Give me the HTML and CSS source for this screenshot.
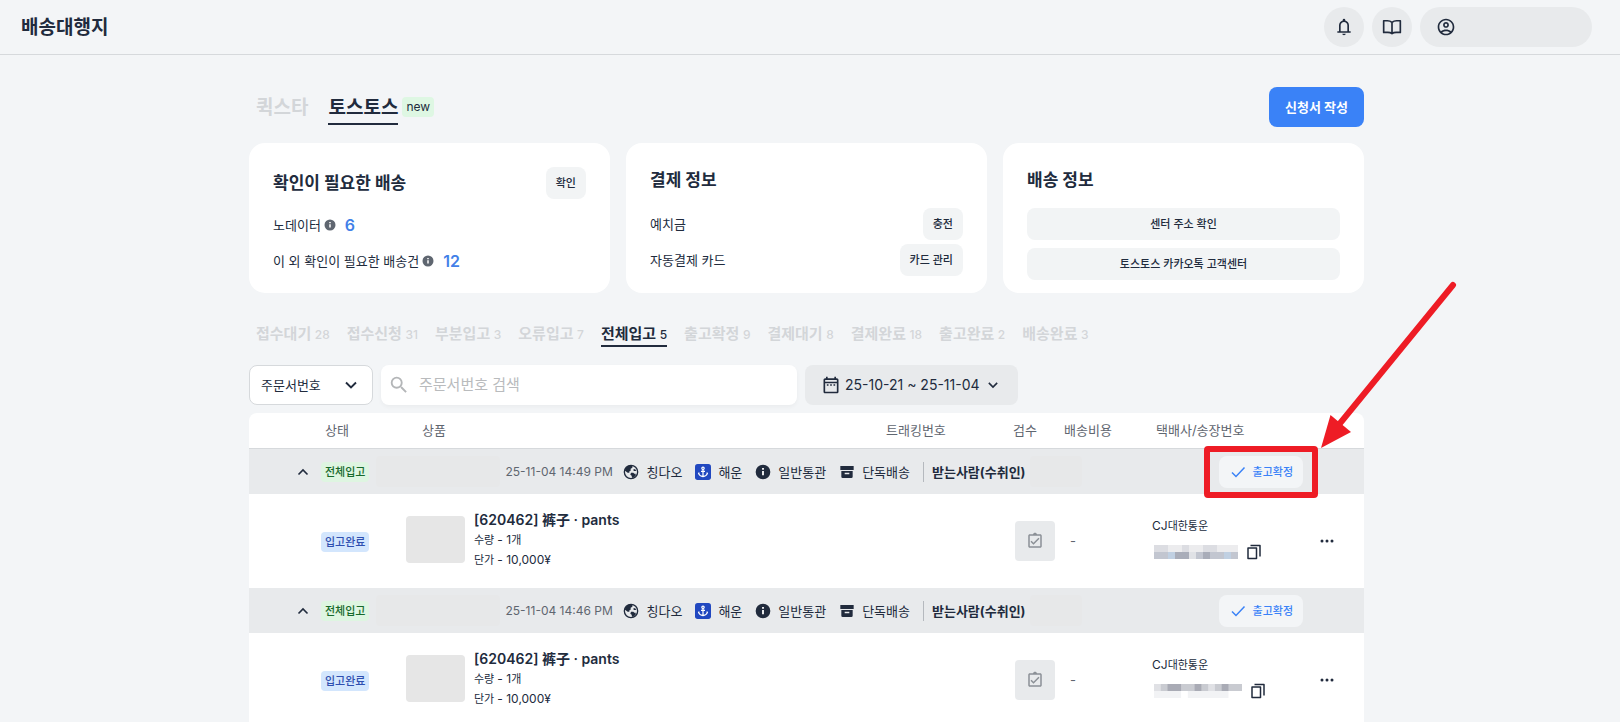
FILE: index.html
```html
<!DOCTYPE html>
<html lang="ko">
<head>
<meta charset="utf-8">
<meta name="viewport" content="width=device-width, initial-scale=1">
<title>배송대행지</title>
<link rel="stylesheet" href="styles.css">
</head>
<body>
<svg class="sprite" aria-hidden="true">
  <symbol id="i-bell" viewBox="0 -960 960 960"><path d="M160-200v-80h80v-280q0-83 50-147.500T420-792v-28q0-25 17.500-42.500T480-880t42.500 17.500T540-820v28q80 20 130 84.500T720-560v280h80v80H160Zm320 120q-33 0-56.500-23.500T400-160h160q0 33-23.500 56.500T480-80ZM320-280h320v-280q0-66-47-113t-113-47q-66 0-113 47t-47 113v280Z"/></symbol>
  <symbol id="i-book" viewBox="0 0 24 24"><path fill="none" stroke="currentColor" stroke-width="2" stroke-linejoin="round" d="M12 6.500C10.500 5.200 8.500 4.500 6.500 4.500H2v14h5c2 0 3.600.4 5 1.500 1.400-1.100 3-1.500 5-1.500h5v-14h-4.500c-2 0-4 .7-5.500 2zM12 6.500V20"/></symbol>
  <symbol id="i-user" viewBox="0 0 24 24"><path d="M12 2C6.480 2 2 6.480 2 12s4.480 10 10 10 10-4.480 10-10S17.520 2 12 2zM7.350 18.500C8.660 17.560 10.260 17 12 17s3.340.56 4.650 1.500c-1.310.94-2.910 1.500-4.650 1.500s-3.340-.56-4.650-1.500zm10.790-1.380C16.450 15.800 14.320 15 12 15s-4.450.8-6.140 2.120C4.700 15.730 4 13.950 4 12c0-4.420 3.580-8 8-8s8 3.580 8 8c0 1.950-.7 3.730-1.860 5.120zM12 6c-1.930 0-3.500 1.570-3.500 3.500S10.070 13 12 13s3.500-1.570 3.500-3.500S13.930 6 12 6zm0 5c-.83 0-1.500-.67-1.500-1.500S11.170 8 12 8s1.500.67 1.500 1.500S12.830 11 12 11z"/></symbol>
  <symbol id="i-info" viewBox="0 0 24 24"><path fill-rule="evenodd" d="M12 1a11 11 0 1 0 0 22 11 11 0 0 0 0-22zm1.500 16h-3v-6.500h3V17zm0-8.500h-3V6h3v2.500z"/></symbol>
  <symbol id="i-down" viewBox="0 0 12 12"><path fill="none" stroke="currentColor" stroke-width="1.900" d="M1 3.500l5 5 5-5"/></symbol>
  <symbol id="i-up" viewBox="0 0 12 12"><path fill="none" stroke="currentColor" stroke-width="1.600" d="M1.500 8.500L6 4l4.500 4.500"/></symbol>
  <symbol id="i-search" viewBox="0 0 24 24"><path d="M15.500 14h-.79l-.28-.27A6.471 6.471 0 0 0 16 9.500 6.500 6.500 0 1 0 9.500 16c1.610 0 3.090-.59 4.230-1.570l.27.28v.79l5 4.990L20.490 19l-4.990-5zm-6 0C7.010 14 5 11.990 5 9.500S7.010 5 9.500 5 14 7.010 14 9.500 11.990 14 9.500 14z"/></symbol>
  <symbol id="i-calendar" viewBox="0 0 24 24"><path d="M7 11h2v2H7v-2zm14-5v14c0 1.100-.9 2-2 2H5c-1.110 0-2-.9-2-2l.01-14c0-1.100.88-2 1.990-2h1V2h2v2h8V2h2v2h1c1.100 0 2 .9 2 2zM5 8h14V6H5v2zm14 12V10H5v10h14zm-4-7h2v-2h-2v2zm-4 0h2v-2h-2v2z"/></symbol>
  <symbol id="i-globe" viewBox="0 0 24 24"><circle cx="12" cy="12" r="10" fill="none" stroke="currentColor" stroke-width="2"/><path d="M3 10c0-4 4-8 9-8l2 1.500c1 1.500-.5 3.500-2.500 3.500v2.500c0 1-1 1.500-2 1.500v2H7zM12 13h3.500l1.500 1.500h2v3l-3.500 3h-2l-.5-3-2-1.500zM15 8.500l3-1 2 3h-3.500z"/></symbol>
  <symbol id="i-anchor" viewBox="0 0 24 24"><rect width="24" height="24" rx="4" fill="#2148c0"/><g fill="none" stroke="#fff" stroke-width="1.800"><circle cx="12" cy="6.500" r="1.800"/><path d="M12 8.300V19M9 11h6M5.500 13v1.500c1 2.800 3.500 4 6.500 4.300 3-.3 5.500-1.500 6.500-4.300V13M5 15l1.500-2M19 15l-1.500-2"/></g></symbol>
  <symbol id="i-archive" viewBox="0 0 24 24"><path fill-rule="evenodd" d="M2 3h20v6H2zM3.500 10.500h17V19a2 2 0 0 1-2 2h-13a2 2 0 0 1-2-2zM8.500 13v2.500h7V13z"/></symbol>
  <symbol id="i-check" viewBox="0 0 16 16"><path fill="none" stroke="currentColor" stroke-width="1.500" d="M2 8.500l4 4L14.500 3.500"/></symbol>
  <symbol id="i-inspect" viewBox="0 0 24 24"><path d="M19 3h-4.180C14.400 1.840 13.300 1 12 1s-2.400.84-2.820 2H5c-1.100 0-2 .9-2 2v14c0 1.100.9 2 2 2h14c1.100 0 2-.9 2-2V5c0-1.100-.9-2-2-2zm0 16H5V5h14v14zM17.990 9l-1.410-1.420-6.590 6.590-2.580-2.570-1.420 1.410 4 3.990z"/></symbol>
  <symbol id="i-copy" viewBox="0 0 16 16"><path fill="none" stroke="currentColor" stroke-width="1.500" stroke-linejoin="round" d="M2 4h8.500v10.500H2zM4.500 1.500H14v11"/></symbol>
  <symbol id="i-more" viewBox="0 0 16 16"><circle cx="3" cy="8" r="1.500"/><circle cx="8" cy="8" r="1.500"/><circle cx="13" cy="8" r="1.500"/></symbol>
</svg>

<header class="topbar">
  <h1 class="topbar-title">배송대행지</h1>
  <div class="topbar-actions">
    <button class="round-btn" type="button" aria-label="알림"><svg class="icon-20"><use href="#i-bell"/></svg></button>
    <button class="round-btn" type="button" aria-label="가이드"><svg class="icon-20"><use href="#i-book"/></svg></button>
    <button class="round-btn account-btn" type="button" aria-label="내 계정"><svg class="icon-20"><use href="#i-user"/></svg></button>
  </div>
</header>

<main class="page">
  <div class="brand-row">
    <nav class="brand-tabs">
      <a class="brand-tab" href="#">퀵스타</a>
      <a class="brand-tab active" href="#">토스토스</a>
      <span class="badge-new">new</span>
    </nav>
    <button class="primary-btn" type="button">신청서 작성</button>
  </div>

  <section class="cards">
    <article class="card">
      <div class="card-head"><h2 class="card-title">확인이 필요한 배송</h2><button class="soft-btn" type="button">확인</button></div>
      <p class="stat">노데이터<svg class="icon-12"><use href="#i-info"/></svg><strong class="stat-num">6</strong></p>
      <p class="stat">이 외 확인이 필요한 배송건<svg class="icon-12"><use href="#i-info"/></svg><strong class="stat-num">12</strong></p>
    </article>
    <article class="card">
      <h2 class="card-title spaced">결제 정보</h2>
      <div class="card-stack tight">
        <div class="pay-row"><span>예치금</span><button class="soft-btn" type="button">충전</button></div>
        <div class="pay-row"><span>자동결제 카드</span><button class="soft-btn" type="button">카드 관리</button></div>
      </div>
    </article>
    <article class="card">
      <h2 class="card-title spaced">배송 정보</h2>
      <div class="card-stack">
        <button class="soft-btn" type="button">센터 주소 확인</button>
        <button class="soft-btn" type="button">토스토스 카카오톡 고객센터</button>
      </div>
    </article>
  </section>

  <nav class="status-tabs">
    <a class="status-tab" href="#">접수대기 <span class="count">28</span></a>
    <a class="status-tab" href="#">접수신청 <span class="count">31</span></a>
    <a class="status-tab" href="#">부분입고 <span class="count">3</span></a>
    <a class="status-tab" href="#">오류입고 <span class="count">7</span></a>
    <a class="status-tab active" href="#">전체입고 <span class="count">5</span></a>
    <a class="status-tab" href="#">출고확정 <span class="count">9</span></a>
    <a class="status-tab" href="#">결제대기 <span class="count">8</span></a>
    <a class="status-tab" href="#">결제완료 <span class="count">18</span></a>
    <a class="status-tab" href="#">출고완료 <span class="count">2</span></a>
    <a class="status-tab" href="#">배송완료 <span class="count">3</span></a>
  </nav>

  <div class="filters">
    <div class="select-box">
      <select class="select" aria-label="검색 기준"><option>주문서번호</option></select>
      <svg class="select-arrow"><use href="#i-down"/></svg>
    </div>
    <label class="search-box">
      <svg class="icon-22"><use href="#i-search"/></svg>
      <input class="search-input" type="text" placeholder="주문서번호 검색" aria-label="주문서번호 검색">
    </label>
    <button class="date-btn" type="button"><svg class="icon-20"><use href="#i-calendar"/></svg><span>25-10-21 ~ 25-11-04</span><svg class="icon-10"><use href="#i-down"/></svg></button>
  </div>

  <table class="orders">
    <colgroup><col class="c-toggle"><col class="c-status"><col><col class="c-track"><col class="c-inspect"><col class="c-cost"><col class="c-courier"><col class="c-more"></colgroup>
    <thead>
      <tr><th></th><th>상태</th><th class="th-product">상품</th><th>트래킹번호</th><th>검수</th><th>배송비용</th><th>택배사/송장번호</th><th></th></tr>
    </thead>
    <tbody>
      <tr class="group-row">
        <td colspan="8">
          <div class="group">
            <button class="bare-btn toggle" type="button" aria-label="접기"><svg class="icon-12"><use href="#i-up"/></svg></button>
            <span class="tag tag-green">전체입고</span>
            <span class="masked masked-id"></span>
            <time class="stamp">25-11-04 14:49 PM</time>
            <span class="meta"><svg class="icon-16"><use href="#i-globe"/></svg>칭다오</span>
            <span class="meta"><svg class="icon-16"><use href="#i-anchor"/></svg>해운</span>
            <span class="meta"><svg class="icon-16"><use href="#i-info"/></svg>일반통관</span>
            <span class="meta"><svg class="icon-16"><use href="#i-archive"/></svg>단독배송</span>
            <strong class="receiver">받는사람(수취인)</strong>
            <span class="masked masked-name"></span>
            <div class="confirm">
              <button class="confirm-btn" type="button"><svg class="icon-16"><use href="#i-check"/></svg>출고확정</button>
              <svg class="callout" viewBox="0 0 256 220" aria-hidden="true"><rect x="3" y="169" width="108" height="46" rx="1" fill="none" stroke="#ee1c25" stroke-width="6"/><path d="M249 5L133 147" stroke="#ee1c25" stroke-width="6" stroke-linecap="round"/><path d="M117 168l9.500-33 20.500 17z" fill="#ee1c25"/></svg>
            </div>
          </div>
        </td>
      </tr>
      <tr class="item-row">
        <td></td>
        <td><span class="tag tag-blue">입고완료</span></td>
        <td>
          <div class="product">
            <span class="thumb"></span>
            <div class="product-text">
              <p class="product-name">[620462] <span lang="zh" class="zh">裤子</span> · pants</p>
              <p class="product-line">수량 <span class="num">- 1</span>개</p>
              <p class="product-line">단가 <span class="num">- 10,000¥</span></p>
            </div>
          </div>
        </td>
        <td></td>
        <td><button class="inspect-btn" type="button" aria-label="검수"><svg class="icon-18"><use href="#i-inspect"/></svg></button></td>
        <td class="cost">-</td>
        <td class="courier-cell">
          <p class="courier"><span class="num">CJ</span>대한통운</p>
          <div class="invoice">
            <svg class="mosaic" viewBox="0 0 84 14" preserveAspectRatio="none" aria-hidden="true"><path fill="#ececee" d="M0 0h84v14H0z"/><path fill="#dcdde2" d="M0 0h14v7H0zM28 0h7v7h-7zM49 0h14v7H49z"/><path fill="#c2c6d0" d="M0 7h84v7H0z"/><path fill="#a9adb9" d="M21 7h14v7H21zM49 7h7v7h-7z"/><path fill="#c0d0e2" d="M14 7h7v7h-7zM70 7h7v7h-7z"/><path fill="#e0e2e6" d="M35 7h7v7h-7z"/></svg>
            <button class="bare-btn" type="button" aria-label="복사"><svg class="icon-16"><use href="#i-copy"/></svg></button>
          </div>
        </td>
        <td><button class="bare-btn more" type="button" aria-label="더보기"><svg class="icon-16"><use href="#i-more"/></svg></button></td>
      </tr>
      <tr class="group-row">
        <td colspan="8">
          <div class="group">
            <button class="bare-btn toggle" type="button" aria-label="접기"><svg class="icon-12"><use href="#i-up"/></svg></button>
            <span class="tag tag-green">전체입고</span>
            <span class="masked masked-id"></span>
            <time class="stamp">25-11-04 14:46 PM</time>
            <span class="meta"><svg class="icon-16"><use href="#i-globe"/></svg>칭다오</span>
            <span class="meta"><svg class="icon-16"><use href="#i-anchor"/></svg>해운</span>
            <span class="meta"><svg class="icon-16"><use href="#i-info"/></svg>일반통관</span>
            <span class="meta"><svg class="icon-16"><use href="#i-archive"/></svg>단독배송</span>
            <strong class="receiver">받는사람(수취인)</strong>
            <span class="masked masked-name"></span>
            <div class="confirm">
              <button class="confirm-btn" type="button"><svg class="icon-16"><use href="#i-check"/></svg>출고확정</button>
            </div>
          </div>
        </td>
      </tr>
      <tr class="item-row">
        <td></td>
        <td><span class="tag tag-blue">입고완료</span></td>
        <td>
          <div class="product">
            <span class="thumb"></span>
            <div class="product-text">
              <p class="product-name">[620462] <span lang="zh" class="zh">裤子</span> · pants</p>
              <p class="product-line">수량 <span class="num">- 1</span>개</p>
              <p class="product-line">단가 <span class="num">- 10,000¥</span></p>
            </div>
          </div>
        </td>
        <td></td>
        <td><button class="inspect-btn" type="button" aria-label="검수"><svg class="icon-18"><use href="#i-inspect"/></svg></button></td>
        <td class="cost">-</td>
        <td class="courier-cell">
          <p class="courier"><span class="num">CJ</span>대한통운</p>
          <div class="invoice">
            <svg class="mosaic mosaic-wide" viewBox="0 0 91 14" preserveAspectRatio="none" aria-hidden="true"><path fill="#c9cbd1" d="M0 0h91v7H0z"/><path fill="#a9abb5" d="M14 0h14v7H14zM42 0h7v7h-7zM70 0h7v7h-7z"/><path fill="#e0e1e5" d="M0 0h7v7H0zM56 0h7v7h-7z"/><path fill="#f2f3f5" d="M0 7h28v7H0zM35 7h42v7H35z"/></svg>
            <button class="bare-btn" type="button" aria-label="복사"><svg class="icon-16"><use href="#i-copy"/></svg></button>
          </div>
        </td>
        <td><button class="bare-btn more" type="button" aria-label="더보기"><svg class="icon-16"><use href="#i-more"/></svg></button></td>
      </tr>
    </tbody>
  </table>
</main>
</body>
</html>
```
FILE: styles.css
```css
:root {
  --ink: #212b3d;
  --muted: #5f6670;
  --faint: #d3d6d9;
  --bg: #f3f5f7;
  --fill: #e8eaec;
  --blue: #3a82f7;
}

* { box-sizing: border-box; margin: 0; }

body {
  display: flex;
  flex-direction: column;
  height: 100vh;
  overflow: hidden;
  background: var(--bg);
  color: var(--ink);
  font: 13px/20px Inter, "Noto Sans CJK KR", sans-serif;
}

button, input, select { font: inherit; color: inherit; border: 0; padding: 0; }
button { cursor: pointer; }
a { color: inherit; text-decoration: none; }
svg { display: block; flex: none; fill: currentColor; }

.sprite { position: absolute; width: 0; height: 0; }
.icon-10 { width: 10px; height: 10px; }
.icon-12 { width: 12px; height: 12px; }
.icon-16 { width: 16px; height: 16px; }
.icon-18 { width: 18px; height: 18px; }
.icon-20 { width: 20px; height: 20px; }
.icon-22 { width: 22px; height: 22px; }

.topbar {
  display: flex;
  flex: none;
  align-items: center;
  justify-content: space-between;
  padding: 7px 28px 7px 21px;
  border-bottom: 1px solid #d6d9dc;
}
.topbar-title { padding-top: 2px; font-size: 19px; line-height: 28px; font-weight: 700; }
.topbar-actions { display: flex; gap: 8px; }
.round-btn {
  display: flex;
  align-items: center;
  justify-content: center;
  width: 40px;
  height: 40px;
  border-radius: 20px;
  background: var(--fill);
}
.account-btn { width: 172px; justify-content: flex-start; padding-left: 16px; }

.page {
  flex: 1;
  min-height: 0;
  width: 100%;
  max-width: 1122px;
  margin: 0 auto;
  padding: 32px 7px 0 0;
}

.brand-row { display: flex; justify-content: space-between; align-items: center; }
.brand-tabs { display: flex; align-items: center; gap: 20px; padding-left: 7px; }
.brand-tab {
  padding: 6px 0 2px;
  border-bottom: 2px solid transparent;
  color: var(--faint);
  font-size: 19px;
  line-height: 26px;
  font-weight: 700;
}
.brand-tab.active { color: var(--ink); border-color: var(--ink); }
.badge-new {
  margin-left: -16px;
  padding: 0 4px;
  border-radius: 4px;
  background: #def7e3;
  font-size: 12px;
}
.primary-btn {
  height: 40px;
  padding: 0 16px;
  border-radius: 8px;
  background: var(--blue);
  color: #fff;
  font-weight: 700;
}

.cards { display: grid; grid-template-columns: repeat(3, 1fr); gap: 16px; margin-top: 16px; }
.card { padding: 24px 24px 13px; border-radius: 16px; background: #fff; }
.card-head { display: flex; align-items: center; justify-content: space-between; margin-bottom: 8px; }
.card-title { font-size: 17px; line-height: 26px; font-weight: 700; }
.card-title.spaced { margin-bottom: 15px; }
.card-stack { display: flex; flex-direction: column; gap: 8px; }
.card-stack.tight { gap: 4px; }
.stat { display: flex; align-items: center; height: 36px; }
.stat .icon-12 { margin: 0 9px 0 3px; color: #5f6670; }
.stat-num { color: #4280e8; font-size: 16px; font-weight: 600; }
.pay-row { display: flex; align-items: center; justify-content: space-between; }
.soft-btn {
  height: 32px;
  padding: 0 10px;
  border-radius: 8px;
  background: #f2f4f5;
  font-size: 11px;
  font-weight: 500;
}

.status-tabs { display: flex; gap: 17px; margin-top: 31px; padding-left: 7px; }
.status-tab {
  padding-bottom: 1px;
  border-bottom: 2px solid transparent;
  color: var(--faint);
  font-size: 15px;
  line-height: 20px;
  font-weight: 700;
}
.status-tab.active { color: var(--ink); border-color: var(--ink); }
.count { font-size: 12px; line-height: 12px; font-weight: 500; }

.filters { display: flex; gap: 8px; margin-top: 18px; }
.select-box { position: relative; width: 124px; }
.select {
  width: 100%;
  height: 40px;
  padding: 0 11px;
  border: 1px solid #d6d9dc;
  border-radius: 8px;
  background: #fff;
  appearance: none;
}
.select-arrow { position: absolute; top: 14px; right: 16px; width: 12px; height: 12px; pointer-events: none; }
.search-box {
  display: flex;
  align-items: center;
  gap: 9px;
  width: 416px;
  height: 40px;
  padding: 0 7px;
  border-radius: 8px;
  background: #fff;
  box-shadow: 0 2px 4px rgb(0 0 0 / 4%);
  color: #b4b6b8;
}
.search-input { flex: 1; min-width: 0; outline: 0; background: none; color: var(--ink); font-size: 15px; }
.search-input::placeholder { color: #b9bbbd; opacity: 1; }
.date-btn {
  display: flex;
  align-items: center;
  gap: 4px;
  height: 40px;
  padding: 0 20px 0 16px;
  border-radius: 8px;
  background: var(--fill);
  font-size: 14px;
}
.date-btn .icon-10 { margin-left: 4px; }

.orders { width: 100%; margin-top: 8px; border-collapse: separate; border-spacing: 0; table-layout: fixed; }
.c-toggle { width: 72px; }
.c-status { width: 85px; }
.c-track { width: 127px; }
.c-inspect { width: 51px; }
.c-cost { width: 92px; }
.c-courier { width: 147px; }
.c-more { width: 65px; }
.orders th {
  height: 36px;
  padding: 0 4px 2px;
  border-bottom: 1px solid #d6d9dc;
  background: #fff;
  color: var(--muted);
  font-weight: 400;
  text-align: left;
  white-space: nowrap;
}
.orders th:first-child { border-top-left-radius: 8px; }
.orders th:last-child { border-top-right-radius: 8px; }
.orders .th-product { padding-left: 16px; }
.orders td { padding: 0; vertical-align: middle; }
.group-row td { background: var(--fill); }
.item-row td { height: 94px; background: #fff; }

.group { display: flex; align-items: center; height: 45px; padding: 0 61px 0 48px; white-space: nowrap; }
.toggle { margin-right: 12px; }
.tag {
  display: inline-block;
  padding: 0 4px;
  border-radius: 4px;
  font-size: 11px;
  line-height: 20px;
  font-weight: 500;
}
.tag-green { background: #def5e1; color: #17692b; }
.tag-blue { background: #d3e6fd; color: #2f4fb0; }
.masked { height: 31px; border-radius: 4px; background: #e7e8e9; }
.masked-id { width: 124px; margin: 0 5px 0 7px; }
.masked-name { width: 52px; margin-left: 4px; }
.stamp { width: 106px; margin-right: 12px; color: var(--muted); font-size: 12px; }
.meta { display: flex; align-items: center; gap: 7px; margin-right: 13px; }
.receiver { padding-left: 8px; border-left: 1px solid #b5b9be; font-weight: 700; }
.confirm { position: relative; margin-left: auto; }
.confirm-btn {
  display: flex;
  align-items: center;
  gap: 7px;
  height: 32px;
  padding: 0 10px 0 11px;
  border-radius: 8px;
  background: #f3f5f7;
  color: var(--blue);
  font-size: 11px;
  font-weight: 500;
}
.callout { position: absolute; z-index: 1; top: -176px; left: -15px; width: 256px; height: 220px; pointer-events: none; }

.product { display: flex; align-items: center; gap: 9px; padding-bottom: 3px; }
.thumb { width: 59px; height: 47px; border-radius: 4px; background: #e6e6e6; }
.product-name { font-size: 14px; font-weight: 600; }
.zh { font-family: "Noto Sans CJK SC", sans-serif; font-weight: 700; line-height: 16px; }
.product-line, .courier { font-size: 11px; }
.num { font-size: 12px; }
.inspect-btn {
  display: flex;
  align-items: center;
  justify-content: center;
  width: 40px;
  height: 40px;
  margin: 0 auto;
  border-radius: 4px;
  background: var(--fill);
  color: #8b9096;
}
.orders .cost { padding-left: 10px; color: var(--muted); }
.orders .courier-cell { padding-bottom: 7px; }
.invoice { display: flex; align-items: center; gap: 8px; margin-top: 8px; padding-left: 2px; }
.mosaic { width: 84px; height: 14px; }
.mosaic-wide { width: 88px; }
.bare-btn { display: flex; background: none; }
.more { margin-left: 20px; }
```
